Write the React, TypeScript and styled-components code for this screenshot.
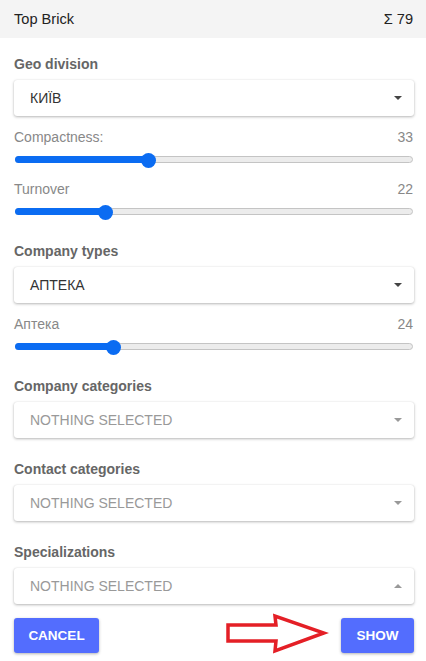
import { ReactElement } from 'react'
import styled, { createGlobalStyle } from 'styled-components'

const GlobalStyle = createGlobalStyle`
  html, body {
    margin: 0;
    padding: 0;
    background: #fff;
  }
  body {
    font-family: "Liberation Sans", Arial, sans-serif;
  }
`

type SliderItem = { label: string; value: number }

function Slider({ label, value }: SliderItem): ReactElement {
  return (
    <SliderBlock>
      <SliderHead>
        <span>{label}</span>
        <span>{value}</span>
      </SliderHead>
      <Track>
        <Fill style={{ width: `${value}%` }} />
        <Thumb style={{ left: `${value}%` }} />
      </Track>
    </SliderBlock>
  )
}

function Select({ text, empty, open }: { text: string; empty?: boolean; open?: boolean }): ReactElement {
  return (
    <SelectBox>
      <SelectText $empty={empty}>{text}</SelectText>
      <Caret $empty={empty} $open={open} />
    </SelectBox>
  )
}

function App(): ReactElement {
  return (
    <Page>
      <GlobalStyle />
      <Header>
        <span>Top Brick</span>
        <span>Σ 79</span>
      </Header>
      <Body>
        <Title>Geo division</Title>
        <Select text="КИЇВ" />
        <Slider label="Compactness:" value={33} />
        <Slider label="Turnover" value={22} />

        <Title $gap={24}>Company types</Title>
        <Select text="АПТЕКА" />
        <Slider label="Аптека" value={24} />

        <Title $gap={24}>Company categories</Title>
        <Select text="NOTHING SELECTED" empty />

        <Title $gap={23}>Contact categories</Title>
        <Select text="NOTHING SELECTED" empty />

        <Title $gap={23}>Specializations</Title>
        <Select text="NOTHING SELECTED" empty open />

        <Footer>
          <Button $width={85}>CANCEL</Button>
          <Spacer />
          {/* red annotation arrow pointing to SHOW */}
          <Arrow width="105" height="42" viewBox="0 0 105 42">
            <polygon
              points="4,12 52,12 51,3 100,20 51,38 52,28 4,28"
              fill="none"
              stroke="#e41f26"
              strokeWidth="3.5"
              strokeLinejoin="miter"
            />
          </Arrow>
          <Button $width={73}>SHOW</Button>
        </Footer>
      </Body>
    </Page>
  )
}

export default App

const Page = styled.div`
  width: 426px;
  height: 661px;
  overflow: hidden;
  background: #fff;
`

const Header = styled.div`
  height: 38px;
  display: flex;
  align-items: center;
  justify-content: space-between;
  padding: 0 13px 0 14px;
  background: #f4f4f4;
  font-size: 14.6px;
  color: #222;
`

const Body = styled.div`
  display: flex;
  flex-direction: column;
  padding: 18px 12px 0 14px;
`

const Title = styled.div<{ $gap?: number }>`
  margin-top: ${p => p.$gap ?? 0}px;
  margin-bottom: 8px;
  height: 16px;
  line-height: 16px;
  font-size: 14px;
  font-weight: bold;
  color: #666;
`

const SelectBox = styled.div`
  height: 36px;
  display: flex;
  align-items: center;
  justify-content: space-between;
  padding: 0 12px 0 16px;
  background: #fff;
  border-radius: 3px;
  box-shadow: 0 1px 3px rgba(0, 0, 0, 0.28), 0 0 1px rgba(0, 0, 0, 0.12);
`

const SelectText = styled.span<{ $empty?: boolean }>`
  font-size: 14px;
  color: ${p => (p.$empty ? '#999' : '#333')};
`

const Caret = styled.span<{ $empty?: boolean; $open?: boolean }>`
  width: 0;
  height: 0;
  border-left: 4px solid transparent;
  border-right: 4px solid transparent;
  ${p =>
    p.$open
      ? `border-bottom: 4px solid ${p.$empty ? '#999' : '#444'};`
      : `border-top: 4px solid ${p.$empty ? '#999' : '#444'};`}
`

const SliderBlock = styled.div`
  margin-top: 13px;
  & + & {
    margin-top: 14px;
  }
`

const SliderHead = styled.div`
  display: flex;
  justify-content: space-between;
  height: 16px;
  line-height: 16px;
  font-size: 14px;
  color: #888;
  padding-right: 1px;
`

const Track = styled.div`
  position: relative;
  margin: 8px 1px 0 1px;
  height: 14px;
  &::before {
    content: '';
    position: absolute;
    left: 0;
    right: 0;
    top: 3px;
    height: 7px;
    border-radius: 4px;
    background: #ececec;
    border: 1px solid #c4c4c4;
    box-sizing: border-box;
  }
`

const Fill = styled.div`
  position: absolute;
  left: 0;
  top: 3px;
  height: 7px;
  border-radius: 4px;
  background: #0b6cf2;
`

const Thumb = styled.div`
  position: absolute;
  top: 0;
  width: 15px;
  height: 15px;
  margin-left: -5px;
  border-radius: 50%;
  background: #0b6cf2;
`

const Footer = styled.div`
  margin-top: 11px;
  display: flex;
  align-items: center;
`

const Spacer = styled.div`
  flex: 1;
`

const Arrow = styled.svg`
  display: block;
  margin-right: 12px;
  margin-top: -2px;
`

const Button = styled.button<{ $width: number }>`
  width: ${p => p.$width}px;
  height: 35px;
  border: none;
  border-radius: 3px;
  background: #536dfe;
  color: #fff;
  font-family: "Liberation Sans", Arial, sans-serif;
  font-size: 13.5px;
  font-weight: bold;
  box-shadow: 0 1px 3px rgba(0, 0, 0, 0.3);
  padding: 0;
`
